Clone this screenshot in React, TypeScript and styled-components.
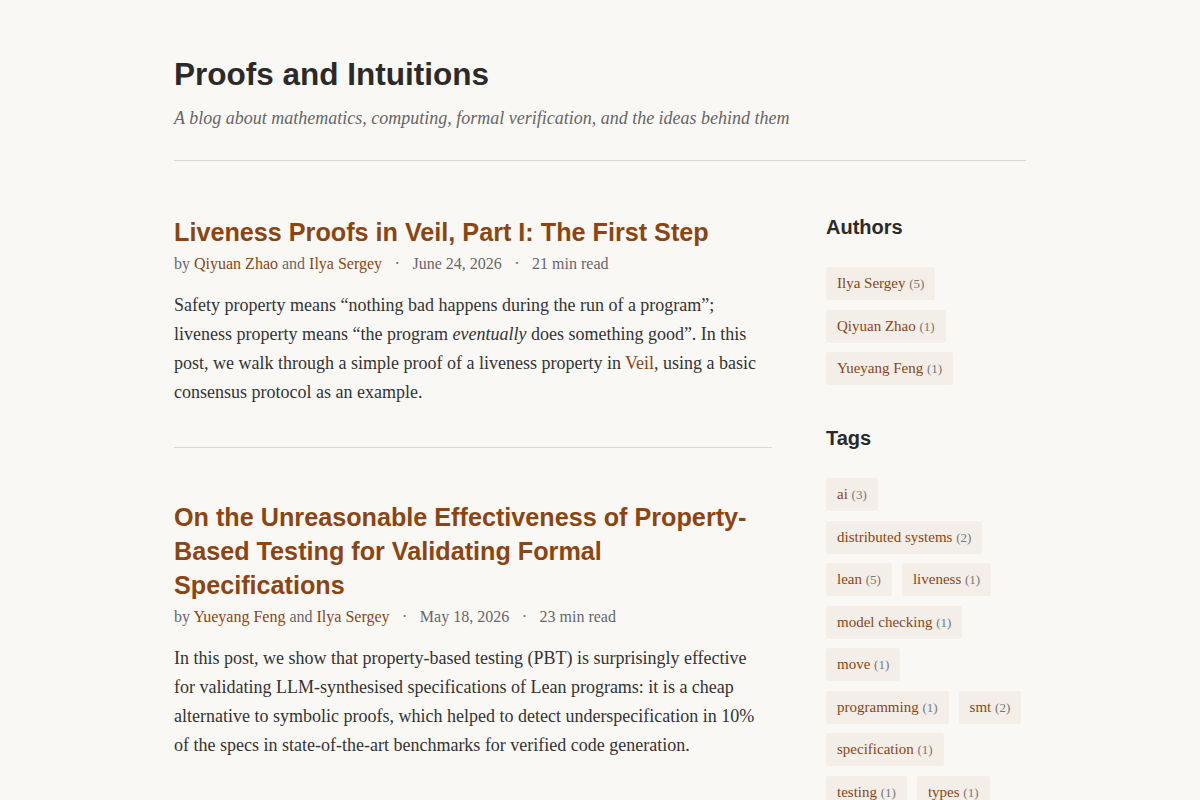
import React from 'react'
import styled, { createGlobalStyle } from 'styled-components'

const GlobalStyle = createGlobalStyle`
  html, body {
    margin: 0;
    padding: 0;
    background: #faf8f5;
  }
  body {
    font-family: 'Liberation Serif', 'Times New Roman', serif;
    color: #333333;
  }
`

const Page = styled.div`
  max-width: 852px;
  margin: 0 auto;
  padding: 55px 0 40px 0;
`

const Header = styled.header`
  padding-bottom: 29px;
  border-bottom: 1px solid #dddad5;
`

const SiteTitle = styled.h1`
  margin: 0;
  font-family: 'Liberation Sans', Arial, sans-serif;
  font-size: 31.5px;
  line-height: 38px;
  font-weight: 700;
  color: #2a2a2a;
`

const Tagline = styled.p`
  margin: 12px 0 0 0;
  font-size: 18px;
  line-height: 26px;
  font-style: italic;
  color: #666666;
`

const Main = styled.div`
  display: grid;
  grid-template-columns: 1fr 200px;
  gap: 54px;
  padding-top: 54px;
`

const Posts = styled.div`
  display: flex;
  flex-direction: column;
`

const Post = styled.article`
  padding-bottom: 40px;
  & + & {
    border-top: 1px solid #dddad5;
    padding-top: 52px;
  }
`

const PostTitle = styled.h2`
  margin: 0;
  font-family: 'Liberation Sans', Arial, sans-serif;
  font-size: 25.2px;
  line-height: 34px;
  font-weight: 700;
  color: #8b4513;
`

const Meta = styled.div`
  margin-top: 3px;
  font-size: 16px;
  line-height: 24px;
  color: #666666;
`

const Link = styled.a`
  color: #8b4513;
  text-decoration: none;
`

const Dot = styled.span`
  margin: 0 12.5px;
`

const Excerpt = styled.p`
  margin: 15px 0 0 0;
  font-size: 18px;
  line-height: 29px;
  color: #333333;
`

const Sidebar = styled.aside`
  display: flex;
  flex-direction: column;
  gap: 41px;
`

const Section = styled.section`
  display: flex;
  flex-direction: column;
  gap: 28px;
`

const SectionTitle = styled.h3`
  margin: 0;
  font-family: 'Liberation Sans', Arial, sans-serif;
  font-size: 20px;
  line-height: 24px;
  font-weight: 700;
  color: #2a2a2a;
`

const PillList = styled.div`
  display: flex;
  flex-wrap: wrap;
  gap: 9.5px 10px;
`

const Pill = styled.a`
  display: inline-block;
  padding: 6px 11px;
  background: #f3eee8;
  border-radius: 3px;
  font-size: 15px;
  line-height: 21px;
  color: #8b4513;
  text-decoration: none;
`

const Count = styled.span`
  font-size: 13px;
  color: #777777;
`

const authors: [string, number][] = [
  ['Ilya Sergey', 5],
  ['Qiyuan Zhao', 1],
  ['Yueyang Feng', 1],
]

const tags: [string, number][] = [
  ['ai', 3],
  ['distributed systems', 2],
  ['lean', 5],
  ['liveness', 1],
  ['model checking', 1],
  ['move', 1],
  ['programming', 1],
  ['smt', 2],
  ['specification', 1],
  ['testing', 1],
  ['types', 1],
]

const App = () => (
  <>
    <GlobalStyle />
    <Page>
      <Header>
        <SiteTitle>Proofs and Intuitions</SiteTitle>
        <Tagline>A blog about mathematics, computing, formal verification, and the ideas behind them</Tagline>
      </Header>
      <Main>
        <Posts>
          <Post>
            <PostTitle>Liveness Proofs in Veil, Part I: The First Step</PostTitle>
            <Meta>
              by <Link>Qiyuan Zhao</Link> and <Link>Ilya Sergey</Link>
              <Dot>·</Dot>June 24, 2026<Dot>·</Dot>21 min read
            </Meta>
            <Excerpt>
              Safety property means “nothing bad happens during the run of a program”; liveness property means
              “the program <em>eventually</em> does something good”. In this post, we walk through a simple proof of a
              liveness property in <Link>Veil</Link>, using a basic consensus protocol as an example.
            </Excerpt>
          </Post>
          <Post>
            <PostTitle>On the Unreasonable Effectiveness of Property-Based Testing for Validating Formal Specifications</PostTitle>
            <Meta>
              by <Link>Yueyang Feng</Link> and <Link>Ilya Sergey</Link>
              <Dot>·</Dot>May 18, 2026<Dot>·</Dot>23 min read
            </Meta>
            <Excerpt>
              In this post, we show that property-based testing (PBT) is surprisingly effective for validating
              LLM-synthesised specifications of Lean programs: it is a cheap alternative to symbolic proofs, which
              helped to detect underspecification in 10% of the specs in state-of-the-art benchmarks for verified code
              generation.
            </Excerpt>
          </Post>
        </Posts>
        <Sidebar>
          <Section>
            <SectionTitle>Authors</SectionTitle>
            <PillList>
              {authors.map(([name, n]) => (
                <Pill key={name}>
                  {name} <Count>({n})</Count>
                </Pill>
              ))}
            </PillList>
          </Section>
          <Section>
            <SectionTitle>Tags</SectionTitle>
            <PillList>
              {tags.map(([name, n]) => (
                <Pill key={name}>
                  {name} <Count>({n})</Count>
                </Pill>
              ))}
            </PillList>
          </Section>
        </Sidebar>
      </Main>
    </Page>
  </>
)

export default App
